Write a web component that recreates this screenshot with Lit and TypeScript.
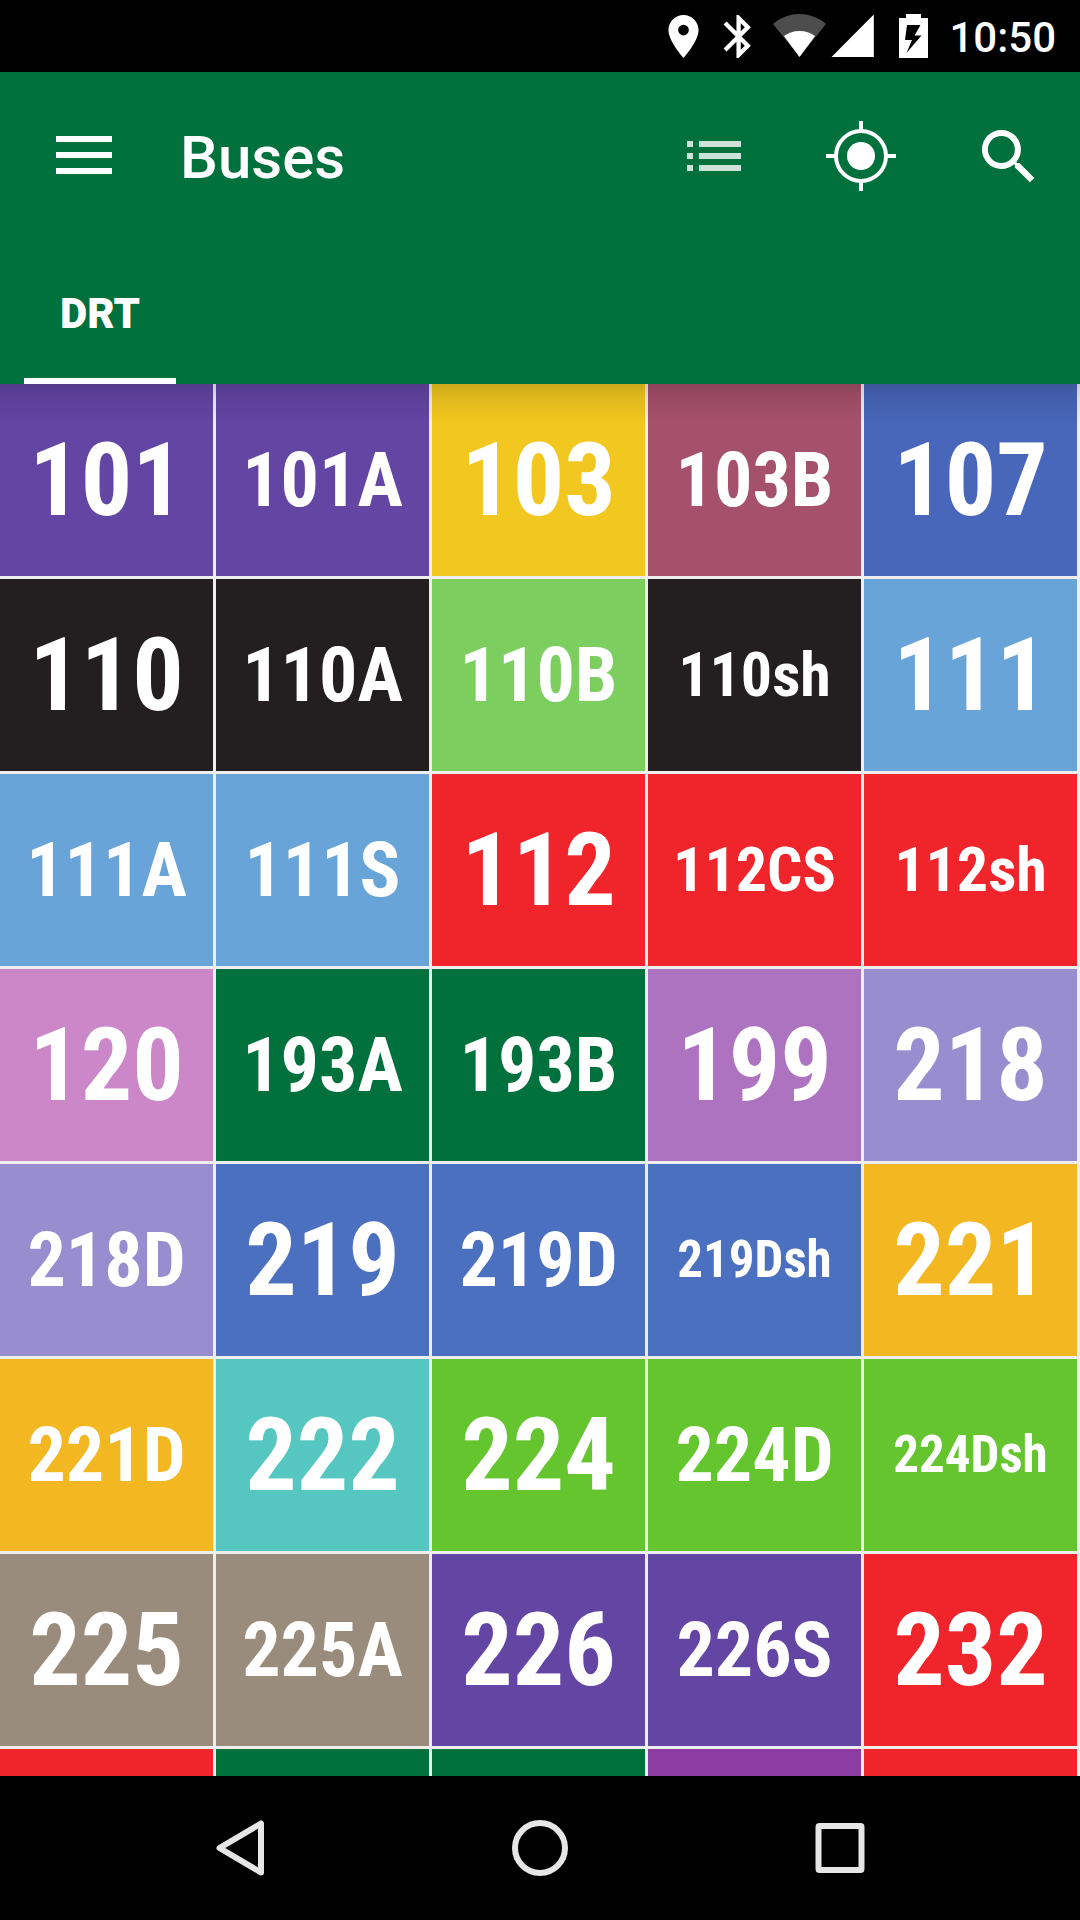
import { LitElement, html, css, svg } from "lit";
import { customElement, property } from "lit/decorators.js";
import { classMap } from "lit/directives/class-map.js";

interface Route {
  name: string;
  color: string;
}

const PURPLE = "#6345a4";
const BLACK = "#231f20";
const SKY = "#69a4d9";
const RED = "#f0252b";
const GREEN = "#00703c";
const LAVENDER = "#988ecf";
const BLUE = "#4b70c0";
const AMBER = "#f3b722";
const LIME = "#64c52f";
const TAUPE = "#998c7c";

const ROUTES: Route[] = [
  { name: "101", color: PURPLE },
  { name: "101A", color: PURPLE },
  { name: "103", color: "#f2c71f" },
  { name: "103B", color: "#a6516b" },
  { name: "107", color: "#4866ba" },
  { name: "110", color: BLACK },
  { name: "110A", color: BLACK },
  { name: "110B", color: "#7ccf5e" },
  { name: "110sh", color: BLACK },
  { name: "111", color: SKY },
  { name: "111A", color: SKY },
  { name: "111S", color: SKY },
  { name: "112", color: RED },
  { name: "112CS", color: RED },
  { name: "112sh", color: RED },
  { name: "120", color: "#cc87c8" },
  { name: "193A", color: GREEN },
  { name: "193B", color: GREEN },
  { name: "199", color: "#ad73c0" },
  { name: "218", color: LAVENDER },
  { name: "218D", color: LAVENDER },
  { name: "219", color: BLUE },
  { name: "219D", color: BLUE },
  { name: "219Dsh", color: BLUE },
  { name: "221", color: AMBER },
  { name: "221D", color: AMBER },
  { name: "222", color: "#55c7c0" },
  { name: "224", color: LIME },
  { name: "224D", color: LIME },
  { name: "224Dsh", color: LIME },
  { name: "225", color: TAUPE },
  { name: "225A", color: TAUPE },
  { name: "226", color: PURPLE },
  { name: "226S", color: PURPLE },
  { name: "232", color: RED },
  { name: "", color: RED },
  { name: "", color: GREEN },
  { name: "", color: GREEN },
  { name: "", color: "#8d3ca3" },
  { name: "", color: RED },
];

@customElement("status-bar")
export class StatusBar extends LitElement {
  static styles = css`
    :host {
      display: flex;
      justify-content: flex-end;
      align-items: center;
      flex: none;
      height: 72px;
      padding-right: 24px;
      background: #000;
      color: #fff;
    }
    .icon {
      display: block;
      height: 72px;
      fill: currentColor;
    }
    .time {
      margin-left: 19px;
      padding-top: 3px;
      font: 500 42px/69px Roboto, "Liberation Sans", sans-serif;
    }
  `;

  render() {
    return html`
      <svg class="icon" width="54" viewBox="0 0 54 72" aria-hidden="true">
        <path transform="translate(1.7 10.7) scale(2.15)" d="M12 2C8.13 2 5 5.13 5 9c0 5.25 7 13 7 13s7-7.75 7-13c0-3.87-3.13-7-7-7zm0 9.5a2.5 2.5 0 1 1 0-5 2.5 2.5 0 0 1 0 5z" />
      </svg>
      <svg class="icon" width="54" viewBox="0 0 54 72" aria-hidden="true">
        <path transform="translate(2.8 10.7) scale(2.15)" d="M17.71 7.71L12 2h-1v7.59L6.41 5 5 6.41 10.59 12 5 17.59 6.41 19 11 14.41V22h1l5.71-5.71-4.3-4.29 4.3-4.29zM13 5.83l1.88 1.88L13 9.59V5.83zm1.88 10.46L13 18.17v-3.76l1.88 1.88z" />
      </svg>
      <svg class="icon" width="65" viewBox="0 0 65 72" aria-hidden="true">
        <path fill="#4d4d4d" d="M9 24C15 18.500 25 14 35.500 14S56 18.500 62 24L35.500 57z" />
        <path d="M20 36C24 33 29 31 35.500 31S47 33 51 36L35.500 57z" />
      </svg>
      <svg class="icon" width="57" viewBox="0 0 57 72" aria-hidden="true">
        <path d="M2.500 57H44.800V14.500z" />
      </svg>
      <svg class="icon" width="44" viewBox="0 0 44 72" aria-hidden="true">
        <path fill-rule="evenodd" d="M13 18H20V14H35V18H42V58H13zM21 25L19 40H26L20.500 53L35.500 35.500H28.500L34.500 25z" />
      </svg>
      <time class="time">10:50</time>
    `;
  }
}

@customElement("app-header")
export class AppHeader extends LitElement {
  static styles = css`
    :host {
      display: block;
      flex: none;
      position: relative;
      z-index: 1;
      background: #00703c;
      color: #fff;
      font-family: Roboto, "Liberation Sans", sans-serif;
    }
    /* soft shadow cast over the tiles */
    :host::after {
      content: "";
      position: absolute;
      top: 100%;
      left: 0;
      right: 0;
      height: 40px;
      background: linear-gradient(rgba(0, 0, 0, 0.15), rgba(0, 0, 0, 0.07) 35%, transparent);
      pointer-events: none;
    }
    .toolbar {
      display: flex;
      align-items: center;
      height: 168px;
    }
    .action {
      display: grid;
      place-items: center;
      flex: none;
      width: 144px;
      height: 168px;
      padding: 0;
      border: 0;
      background: none;
      color: inherit;
    }
    .action svg {
      display: block;
      fill: currentColor;
    }
    .menu {
      width: 168px;
      padding-bottom: 2px;
    }
    .dim {
      opacity: 0.8;
    }
    .title {
      flex: 1;
      margin: 0;
      padding: 4px 0 0 12px;
      font-size: 60px;
      font-weight: 500;
      line-height: 72px;
    }
    .actions {
      display: flex;
      gap: 3px;
    }
    .tabs {
      display: flex;
      height: 144px;
      padding: 0 24px;
    }
    .tab {
      padding: 10px 36px 0;
      border: 0;
      border-bottom: 6px solid #fff;
      background: none;
      color: inherit;
      font: inherit;
      font-size: 42px;
      font-weight: 900;
      line-height: 48px;
    }
  `;

  render() {
    return html`
      <div class="toolbar">
        <button class="action menu" aria-label="Menu">
          <svg width="56" height="38" viewBox="0 0 56 38">
            <path d="M0 0H56V6H0zM0 16H56V22H0zM0 32H56V38H0z" />
          </svg>
        </button>
        <h1 class="title">Buses</h1>
        <div class="actions">
          <button class="action" aria-label="List">
            <svg class="dim" width="54" height="30" viewBox="0 0 54 30">
              <path d="M0 0H6V6H0zM12 0H54V6H12zM0 12H6V18H0zM12 12H54V18H12zM0 24H6V30H0zM12 24H54V30H12z" />
            </svg>
          </button>
          <button class="action" aria-label="Locate">
            <svg width="70" height="70" viewBox="0 0 70 70">
              <circle cx="35" cy="35" r="14" />
              <circle cx="35" cy="35" r="25" fill="none" stroke="currentColor" stroke-width="4" />
              <path d="M33 0H37V9H33zM33 61H37V70H33zM0 33H9V37H0zM61 33H70V37H61z" />
            </svg>
          </button>
          <button class="action" aria-label="Search">
            <svg width="72" height="72" viewBox="-0.3 -0.3 24 24">
              <path d="M15.500 14h-.79l-.28-.27A6.471 6.471 0 0 0 16 9.500 6.500 6.500 0 1 0 9.500 16c1.610 0 3.090-.59 4.230-1.570l.27.28v.79l5 4.990L20.490 19l-4.990-5zm-6 0C7.010 14 5 11.990 5 9.500S7.010 5 9.500 5 14 7.010 14 9.500 11.990 14 9.500 14z" />
            </svg>
          </button>
        </div>
      </div>
      <div class="tabs" role="tablist">
        <button class="tab" role="tab" aria-selected="true">DRT</button>
      </div>
    `;
  }
}

@customElement("route-grid")
export class RouteGrid extends LitElement {
  @property({ attribute: false }) routes: Route[] = [];

  static styles = css`
    :host {
      display: block;
      flex: 1;
      min-height: 0;
      overflow-y: auto;
      scrollbar-width: none;
      background: #eee;
    }
    .grid {
      display: grid;
      grid-template-columns: repeat(5, minmax(0, 1fr));
      grid-auto-rows: 192px;
      gap: 3px;
      padding-right: 3px;
    }
    .tile {
      padding: 0;
      border: 0;
      color: #fff;
      font-family: "Roboto Condensed", "Liberation Sans Narrow", Roboto, sans-serif;
      font-size: 102px;
      font-weight: 700;
      line-height: 120px;
      white-space: nowrap;
    }
    .four {
      font-size: 76px;
    }
    .five {
      font-size: 62px;
    }
    .six {
      font-size: 51px;
    }
  `;

  render() {
    return html`
      <div class="grid">
        ${this.routes.map(
          ({ name, color }) => html`<button
            class=${classMap({
              tile: true,
              four: name.length === 4,
              five: name.length === 5,
              six: name.length === 6,
            })}
            style="background:${color}"
          >${name}</button>`
        )}
      </div>
    `;
  }
}

@customElement("nav-bar")
export class NavBar extends LitElement {
  static styles = css`
    :host {
      display: flex;
      flex: none;
      height: 144px;
      padding: 0 90px;
      background: #000;
    }
    .key {
      display: grid;
      place-items: center;
      flex: 1;
      padding: 0;
      border: 0;
      background: none;
      color: #e6e6e6;
    }
    .key svg {
      display: block;
      fill: none;
      stroke: currentColor;
      stroke-width: 6;
      stroke-linejoin: round;
    }
  `;

  private key(label: string, shape: unknown) {
    return html`<button class="key" aria-label=${label}>
      <svg width="60" height="60" viewBox="0 0 60 60">${shape}</svg>
    </button>`;
  }

  render() {
    return html`
      ${this.key("Back", svg`<path d="M51 5.500V54.500L9.500 30z" />`)}
      ${this.key("Home", svg`<circle cx="30" cy="30" r="25" />`)}
      ${this.key("Recents", svg`<rect x="8.500" y="8" width="43" height="44" rx="1" />`)}
    `;
  }
}

@customElement("app-root")
export class AppRoot extends LitElement {
  static styles = css`
    :host {
      display: flex;
      flex-direction: column;
      height: 100vh;
    }
  `;

  render() {
    return html`
      <status-bar></status-bar>
      <app-header></app-header>
      <route-grid .routes=${ROUTES}></route-grid>
      <nav-bar></nav-bar>
    `;
  }
}
